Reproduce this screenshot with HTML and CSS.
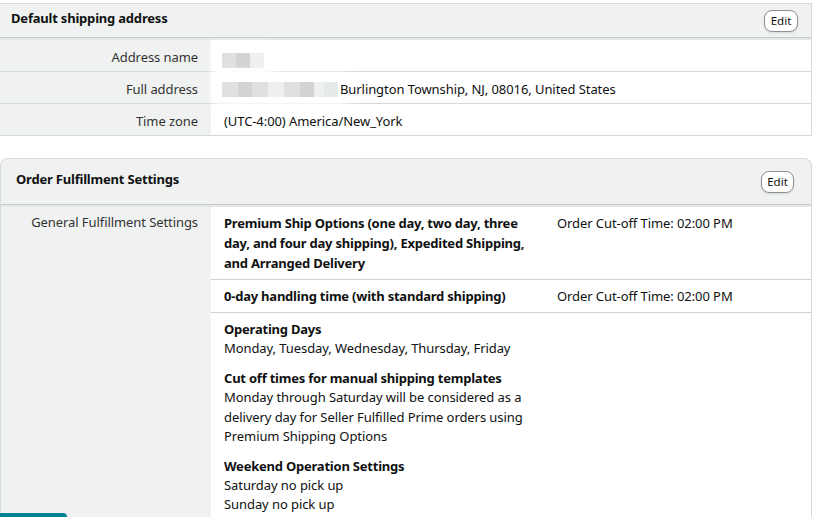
FILE: index.html
```html
<!DOCTYPE html>
<html lang="en">
<head>
<meta charset="utf-8">
<title>Shipping settings</title>
<link rel="stylesheet" href="styles.css">
</head>
<body>
<main class="page">
  <section class="panel panel-address">
    <header class="panel-head">
      <h2 class="panel-title">Default shipping address</h2>
      <button class="edit-btn" type="button">Edit</button>
    </header>
    <div class="panel-body">
      <div class="kv-row">
        <div class="kv-label">Address name</div>
        <div class="kv-value">
          <span class="redact redact-name"><i class="px px-a"></i><i class="px px-b"></i><i class="px px-c"></i></span>
        </div>
      </div>
      <div class="kv-row">
        <div class="kv-label">Full address</div>
        <div class="kv-value">
          <span class="redact redact-addr"><i class="px px-a w16"></i><i class="px px-b w14"></i><i class="px px-a w16"></i><i class="px px-c w16"></i><i class="px px-a w16"></i><i class="px px-b w14"></i><i class="px px-c w10"></i><i class="px px-d w14"></i></span>
          <span class="addr-text">Burlington Township, NJ, 08016, United States</span>
        </div>
      </div>
      <div class="kv-row">
        <div class="kv-label">Time zone</div>
        <div class="kv-value">(UTC-4:00) America/New_York</div>
      </div>
    </div>
  </section>

  <section class="panel panel-fulfill">
    <header class="panel-head">
      <h2 class="panel-title">Order Fulfillment Settings</h2>
      <button class="edit-btn" type="button">Edit</button>
    </header>
    <div class="fulfill-body">
      <div class="fulfill-label">General Fulfillment Settings</div>
      <div class="fulfill-content">
        <div class="opt-row">
          <div class="opt-name">Premium Ship Options (one day, two day, three day, and four day shipping), Expedited Shipping, and Arranged Delivery</div>
          <div class="opt-time">Order Cut-off Time: 02:00 PM</div>
        </div>
        <div class="opt-row">
          <div class="opt-name">0-day handling time (with standard shipping)</div>
          <div class="opt-time">Order Cut-off Time: 02:00 PM</div>
        </div>
        <div class="ops">
          <div class="ops-block">
            <div class="ops-title">Operating Days</div>
            <div class="ops-text">Monday, Tuesday, Wednesday, Thursday, Friday</div>
          </div>
          <div class="ops-block">
            <div class="ops-title">Cut off times for manual shipping templates</div>
            <div class="ops-text ops-narrow">Monday through Saturday will be considered as a delivery day for Seller Fulfilled Prime orders using Premium Shipping Options</div>
          </div>
          <div class="ops-block">
            <div class="ops-title">Weekend Operation Settings</div>
            <div class="ops-text">Saturday no pick up</div>
            <div class="ops-text">Sunday no pick up</div>
          </div>
        </div>
      </div>
    </div>
  </section>
</main>
<div class="float-tab"></div>
</body>
</html>
```
FILE: styles.css
```css
* { box-sizing: border-box; }

html, body {
  margin: 0;
  padding: 0;
  background: #ffffff;
  height: 517px;
  overflow: hidden;
}

body {
  font-family: "Noto Sans", "Open Sans", "Liberation Sans", sans-serif;
  font-size: 13px;
  line-height: 20px;
  letter-spacing: -0.08px;
  color: #0f1111;
}

.page {
  width: 812px;
  padding-top: 3px;
}

.panel {
  background: #ffffff;
  border-right: 1px solid #d5d9d9;
  border-top: 1px solid #d5d9d9;
}

.panel-head {
  display: flex;
  justify-content: space-between;
  align-items: flex-start;
  background: #f0f2f2;
  border-bottom: 1px solid #c5c9c9;
  box-shadow: 0 2px 0 #e6e8e8;
}

.panel-title {
  margin: 0;
  font-size: 13px;
  line-height: 20px;
  font-weight: 700;
  letter-spacing: -0.2px;
}

.edit-btn {
  font-family: inherit;
  font-size: 11.5px;
  line-height: 18px;
  letter-spacing: 0;
  color: #0f1111;
  background: #ffffff;
  border: 1px solid #8d9096;
  border-radius: 8px;
  padding: 1px 6px 1px;
  height: 22px;
  box-shadow: 0 1px 2px rgba(15, 17, 17, 0.12);
}

/* ---------- address panel ---------- */
.panel-address .panel-head {
  height: 34px;
  padding: 4px 13px 0 11px;
}
.panel-address .edit-btn {
  margin-top: 2px;
  width: 34px;
  padding: 1px 0;
}

.panel-body {
  margin-top: 2px;
}

.kv-row {
  display: grid;
  grid-template-columns: 211px 1fr;
  height: 32px;
  border-bottom: 1px solid #d5d9d9;
}

.kv-label {
  background: #f0f2f2;
  text-align: right;
  padding: 7px 13px 0 0;
  color: #333333;
}

.kv-value {
  position: relative;
  display: flex;
  align-items: flex-start;
  padding: 7px 0 0 13px;
}

.redact {
  display: inline-flex;
  height: 15px;
  background: #ffffff;
  box-shadow: 0 0 9px 9px #ffffff;
}
.redact-name {
  margin-top: 6px;
  margin-left: -2px;
}
.redact-addr {
  margin-top: 3px;
  margin-left: -2px;
}
.px { display: block; height: 15px; width: 14px; }
.px-a { background: #e1e0df; }
.px-b { background: #d4d3d2; }
.px-c { background: #eeefef; }
.px-d { background: #e6e9ea; }
.w16 { width: 16px; }
.w14 { width: 14px; }
.w10 { width: 10px; }

.addr-text {
  margin-left: 2px;
}

/* ---------- fulfillment panel ---------- */
.panel-fulfill {
  margin-top: 22px;
  border-left: 1px solid #d5d9d9;
  border-radius: 8px 8px 0 0;
  overflow: hidden;
}

.panel-fulfill .panel-head {
  height: 46px;
  padding: 10px 17px 0 15px;
}
.panel-fulfill .edit-btn {
  margin-top: 2px;
  width: 33px;
  padding: 1px 0;
}

.fulfill-body {
  display: grid;
  grid-template-columns: 210px 1fr;
  margin-top: 2px;
  min-height: 320px;
}

.fulfill-label {
  background: #f0f2f2;
  text-align: right;
  padding: 5px 13px 0 0;
  color: #333333;
}

.fulfill-content {
  background: #ffffff;
}

.opt-row {
  display: grid;
  grid-template-columns: 320px 1fr;
  column-gap: 13px;
  padding: 6px 13px 6px 13px;
  border-bottom: 1px solid #cdd1d1;
}

.opt-name {
  font-weight: 700;
  letter-spacing: -0.22px;
}

.ops {
  display: flex;
  flex-direction: column;
  gap: 10.5px;
  padding: 7px 13px 0 13px;
  line-height: 19.3px;
}

.ops-title {
  font-weight: 700;
  letter-spacing: -0.22px;
}

.ops-narrow {
  max-width: 320px;
}

.float-tab {
  position: fixed;
  left: 0;
  bottom: 0;
  width: 67px;
  height: 4px;
  background: #008296;
  border-top-right-radius: 4px;
}
```
